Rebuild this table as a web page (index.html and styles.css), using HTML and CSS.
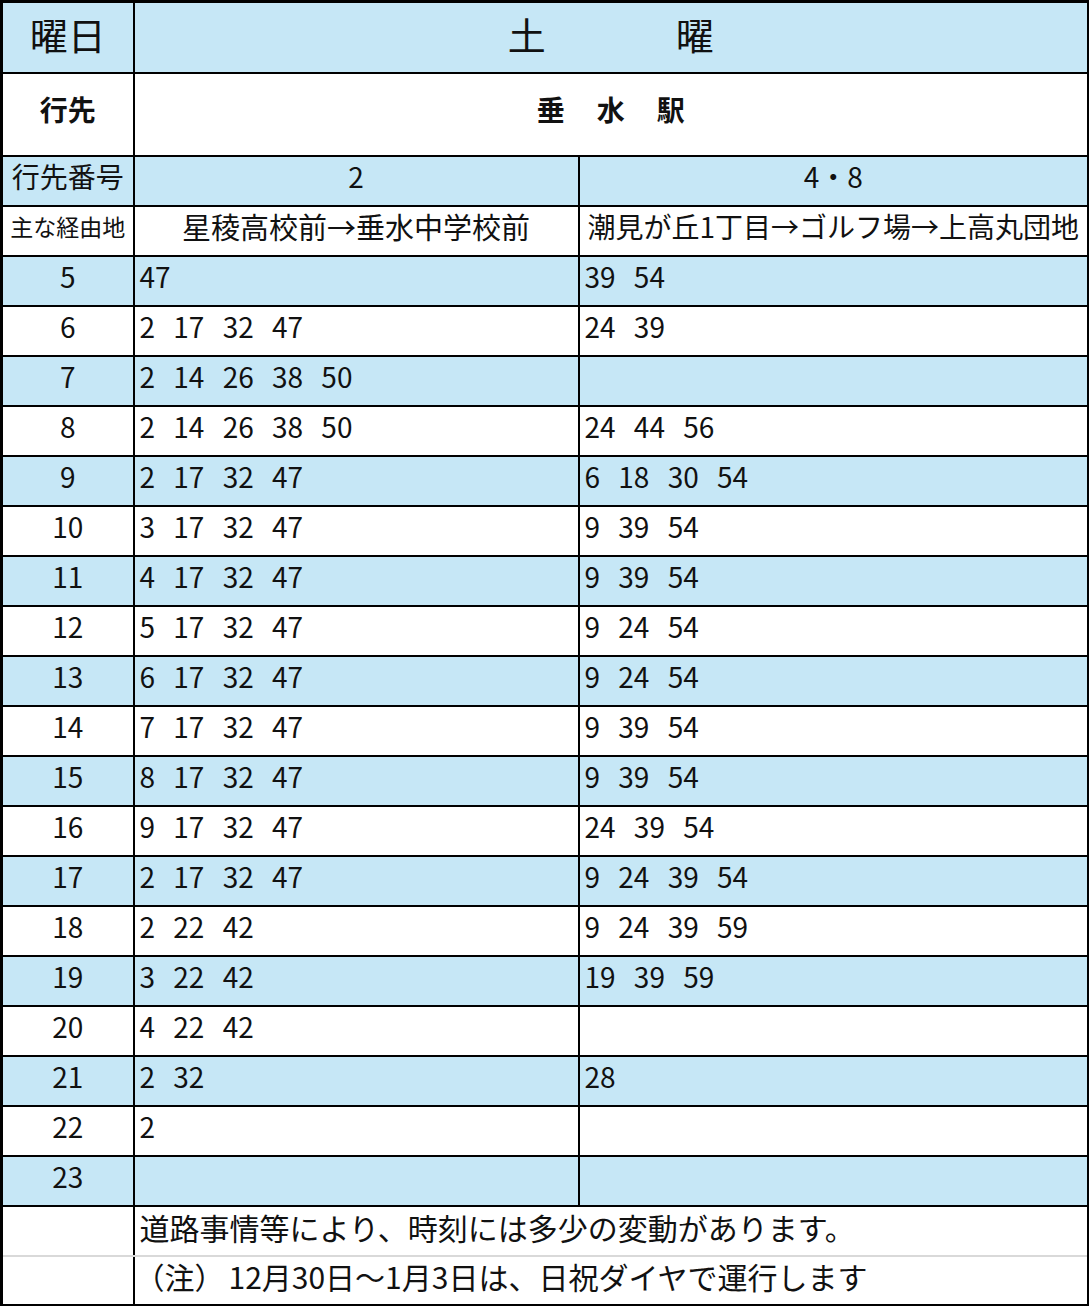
FILE: index.html
```html
<!DOCTYPE html>
<html lang="ja">
<head>
<meta charset="utf-8">
<title>時刻表 土曜 垂水駅</title>
<link rel="stylesheet" href="styles.css">
</head>
<body>
<table class="tt">
  <colgroup>
    <col class="c-hour">
    <col class="c-a">
    <col class="c-b">
  </colgroup>
  <tr class="blue r-day">
    <td class="center day-label">曜日</td>
    <td class="center day-name" colspan="2"><span class="spread-wide"><span>土</span><span>曜</span></span></td>
  </tr>
  <tr class="r-dest">
    <td class="center bold">行先</td>
    <td class="center bold" colspan="2"><span class="spread"><span>垂</span><span>水</span><span>駅</span></span></td>
  </tr>
  <tr class="blue r-std">
    <td class="center">行先番号</td>
    <td class="center">2</td>
    <td class="center">4・8</td>
  </tr>
  <tr class="r-std r-via">
    <td class="center small">主な経由地</td>
    <td class="center via-a">星稜高校前→垂水中学校前</td>
    <td class="center tight">潮見が丘1丁目→ゴルフ場→上高丸団地</td>
  </tr>
  <tr class="blue r-std"><td class="center">5</td><td class="times">47</td><td class="times">39 54</td></tr>
  <tr class="r-std"><td class="center">6</td><td class="times">2 17 32 47</td><td class="times">24 39</td></tr>
  <tr class="blue r-std"><td class="center">7</td><td class="times">2 14 26 38 50</td><td class="times"></td></tr>
  <tr class="r-std"><td class="center">8</td><td class="times">2 14 26 38 50</td><td class="times">24 44 56</td></tr>
  <tr class="blue r-std"><td class="center">9</td><td class="times">2 17 32 47</td><td class="times">6 18 30 54</td></tr>
  <tr class="r-std"><td class="center">10</td><td class="times">3 17 32 47</td><td class="times">9 39 54</td></tr>
  <tr class="blue r-std"><td class="center">11</td><td class="times">4 17 32 47</td><td class="times">9 39 54</td></tr>
  <tr class="r-std"><td class="center">12</td><td class="times">5 17 32 47</td><td class="times">9 24 54</td></tr>
  <tr class="blue r-std"><td class="center">13</td><td class="times">6 17 32 47</td><td class="times">9 24 54</td></tr>
  <tr class="r-std"><td class="center">14</td><td class="times">7 17 32 47</td><td class="times">9 39 54</td></tr>
  <tr class="blue r-std"><td class="center">15</td><td class="times">8 17 32 47</td><td class="times">9 39 54</td></tr>
  <tr class="r-std"><td class="center">16</td><td class="times">9 17 32 47</td><td class="times">24 39 54</td></tr>
  <tr class="blue r-std"><td class="center">17</td><td class="times">2 17 32 47</td><td class="times">9 24 39 54</td></tr>
  <tr class="r-std"><td class="center">18</td><td class="times">2 22 42</td><td class="times">9 24 39 59</td></tr>
  <tr class="blue r-std"><td class="center">19</td><td class="times">3 22 42</td><td class="times">19 39 59</td></tr>
  <tr class="r-std"><td class="center">20</td><td class="times">4 22 42</td><td class="times"></td></tr>
  <tr class="blue r-std"><td class="center">21</td><td class="times">2 32</td><td class="times">28</td></tr>
  <tr class="r-std"><td class="center">22</td><td class="times">2</td><td class="times"></td></tr>
  <tr class="blue r-std"><td class="center">23</td><td class="times"></td><td class="times"></td></tr>
  <tr class="r-std r-note1">
    <td></td>
    <td class="note" colspan="2">道路事情等により、時刻には多少の変動があります。</td>
  </tr>
  <tr class="r-std r-note2">
    <td></td>
    <td class="note note-b" colspan="2"><span class="note-mark">（注）</span>12月30日～1月3日は、日祝ダイヤで運行します</td>
  </tr>
</table>
</body>
</html>
```

FILE: styles.css
```css
html, body {
  margin: 0;
  padding: 0;
  background: #ffffff;
}

body {
  font-family: "Noto Sans CJK JP", "Noto Sans", sans-serif;
  color: #111111;
}

.tt {
  border-collapse: collapse;
  table-layout: fixed;
  width: 1087px;
  border: 3px solid #000000;
}

.c-hour { width: 132px; }
.c-a { width: 445px; }
.c-b { width: 510px; }

.tt td {
  border: 2px solid #000000;
  padding: 0 5px 8px;
  font-size: 28px;
  line-height: 1.2;
  white-space: nowrap;
  overflow: hidden;
  vertical-align: middle;
}

.blue td {
  background: #c6e7f6;
}

.r-day { height: 71px; }
.r-dest { height: 83px; }
.r-std { height: 50px; }

.center { text-align: center; }
.bold { font-weight: 700; }

.tt .day-label,
.tt .day-name {
  font-size: 38px;
  padding-bottom: 6px;
}

.spread-wide {
  display: inline-flex;
  gap: 130px;
}

.spread {
  display: inline-flex;
  gap: 32px;
}

.tt .small {
  font-size: 23px;
  padding-left: 0;
  padding-right: 0;
}

.tt .via-a {
  font-size: 29px;
}

.tt .tight {
  padding-left: 0;
  padding-right: 0;
}

.times {
  word-spacing: 12px;
}

.tt .note {
  font-size: 30px;
}

.tt .note-b {
  padding-left: 0;
}

.note-mark {
  margin-right: 4px;
}

.tt .r-note1 td {
  border-bottom: 2px solid #d9d9d9;
}

.tt .r-note2 td {
  border-top: 2px solid #d9d9d9;
}
```
